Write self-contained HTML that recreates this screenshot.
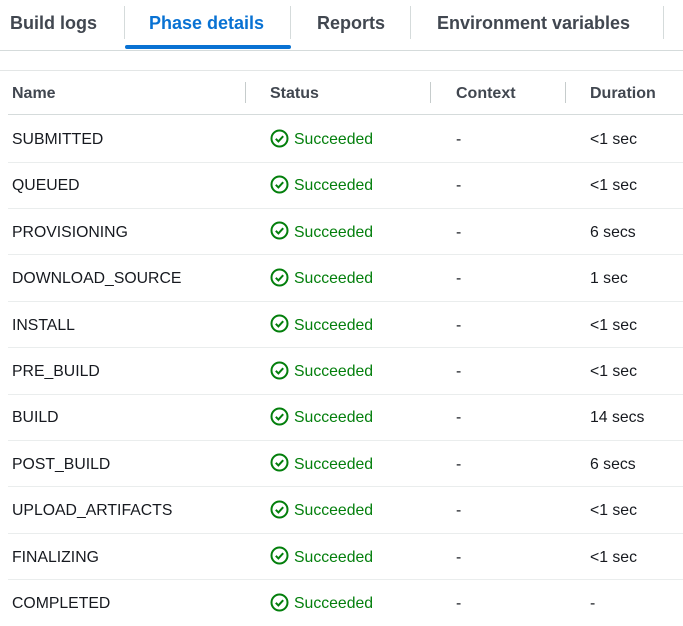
<!DOCTYPE html><html><head><style>
body{margin:0;width:683px;height:626px;background:#fff;font-family:"Liberation Sans",sans-serif;color:#16191f;position:relative;overflow:hidden}
.tab{position:absolute;top:13px;font-size:18px;font-weight:bold;color:#414750}
.sep{position:absolute;width:1px;background:#d5dbdb}
.h{position:absolute;top:85px;font-size:16px;font-weight:bold;color:#414750}
.line{position:absolute;left:8px;right:0;height:1px;background:#eaeded}
.c{position:absolute;font-size:15.8px;line-height:20px}
.g{color:#037f0c}
</style></head><body>
<div class="tab" style="left:10px">Build logs</div>
<div class="tab" style="left:149px;color:#0972d3">Phase details</div>
<div class="tab" style="left:317px">Reports</div>
<div class="tab" style="left:437px">Environment variables</div>
<div class="sep" style="left:124px;top:6px;height:33px"></div>
<div class="sep" style="left:290px;top:6px;height:33px"></div>
<div class="sep" style="left:410px;top:6px;height:33px"></div>
<div class="sep" style="left:663px;top:6px;height:33px"></div>
<div style="position:absolute;left:125px;top:45px;width:166px;height:4px;border-radius:2px;background:#0972d3"></div>
<div style="position:absolute;left:0;right:0;top:50px;height:1px;background:#d5dbdb"></div>
<div style="position:absolute;left:0;right:0;top:70px;height:1px;background:#e3e6e6"></div>
<div class="h" style="left:12px">Name</div>
<div class="h" style="left:270px">Status</div>
<div class="h" style="left:456px">Context</div>
<div class="h" style="left:590px">Duration</div>
<div class="sep" style="left:245px;top:82px;height:21px;background:#c6cccc"></div>
<div class="sep" style="left:430px;top:82px;height:21px;background:#c6cccc"></div>
<div class="sep" style="left:565px;top:82px;height:21px;background:#c6cccc"></div>
<div class="line" style="top:114px;background:#d5dbdb"></div>
<div id="rows"></div>
<script>
var d=[["SUBMITTED","<1 sec"],["QUEUED","<1 sec"],["PROVISIONING","6 secs"],["DOWNLOAD_SOURCE","1 sec"],["INSTALL","<1 sec"],["PRE_BUILD","<1 sec"],["BUILD","14 secs"],["POST_BUILD","6 secs"],["UPLOAD_ARTIFACTS","<1 sec"],["FINALIZING","<1 sec"],["COMPLETED","-"]];
var h="";
d.forEach(function(r,i){var y=138+46.4*i;var t=y-8;
h+='<div class="c" style="left:12px;top:'+t+'px">'+r[0]+'</div>';
h+='<svg style="position:absolute;left:270px;top:'+(y-9.5)+'px" width="19" height="19" viewBox="0 0 19 19"><circle cx="9.5" cy="9.5" r="8" fill="none" stroke="#037f0c" stroke-width="2"/><path d="M5.8 9.8l2.6 2.6 4.8-5.2" fill="none" stroke="#037f0c" stroke-width="2"/></svg>';
h+='<div class="c g" style="left:294px;top:'+t+'px">Succeeded</div>';
h+='<div class="c" style="left:456px;top:'+t+'px">-</div>';
h+='<div class="c" style="left:590px;top:'+t+'px">'+r[1].replace("<","&lt;")+'</div>';
if(i<10)h+='<div class="line" style="top:'+(161.5+46.4*i)+'px"></div>';});
document.getElementById("rows").innerHTML=h;
</script>
</body></html>
